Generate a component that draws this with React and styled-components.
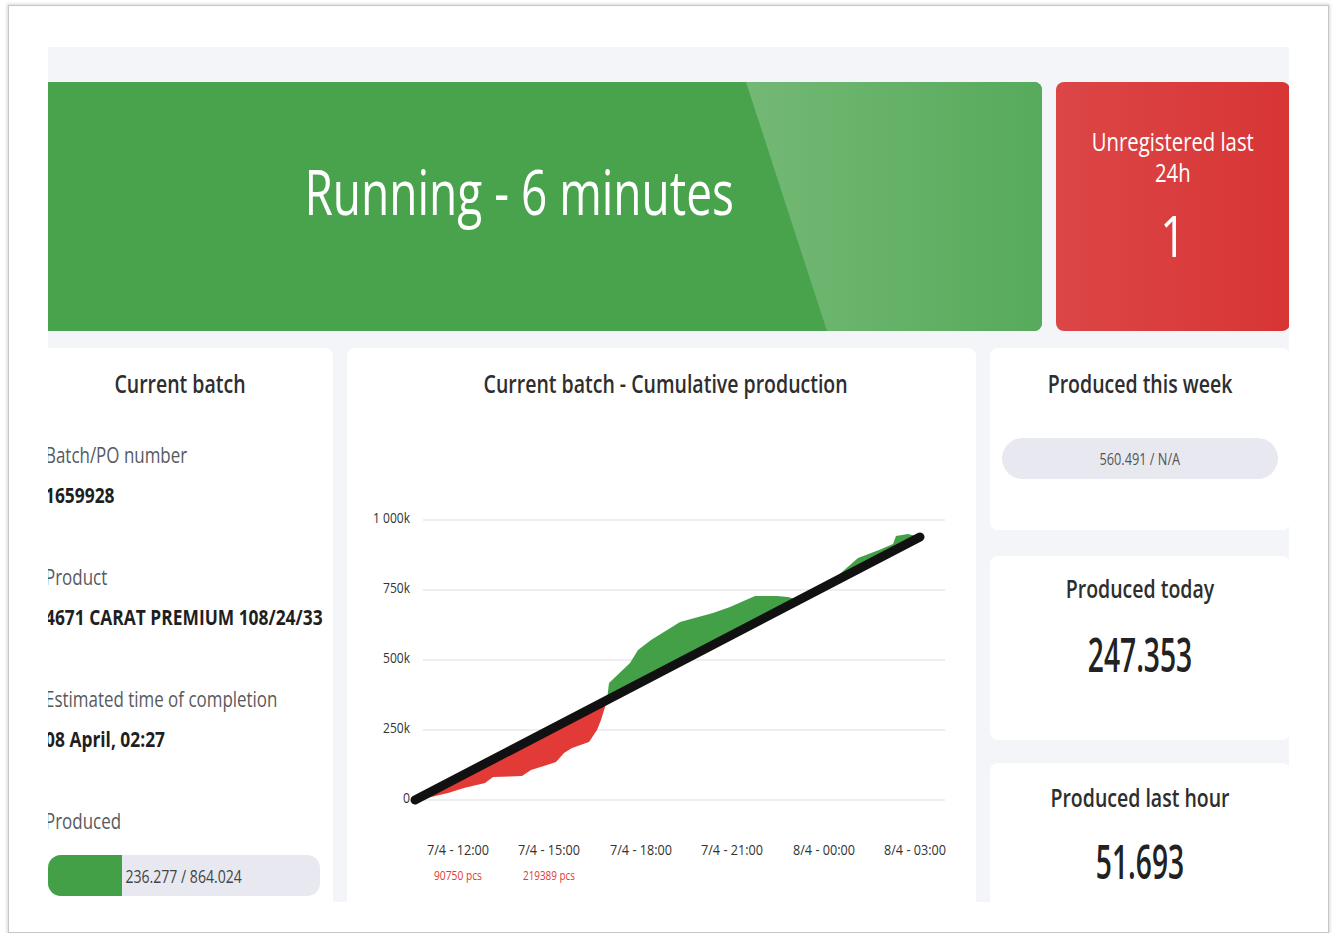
import React from 'react';
import styled, { createGlobalStyle, css } from 'styled-components';

const colors = {
  board: '#f4f5f9',
  card: '#ffffff',
  green: '#48a34c',
  fillGreen: '#43a047',
  fillRed: '#e23a36',
  track: '#e8e9f0',
  title: '#2e2e2e',
  label: '#565a5e',
  value: '#1f1f1f',
  grid: '#e9e9ec'
};

const squeeze = (k, origin = 'center') => css`
  display: block;
  white-space: nowrap;
  transform: scaleX(${k});
  transform-origin: ${origin};
`;

const GlobalStyle = createGlobalStyle`
  html, body {
    margin: 0;
    background: #ffffff;
    font-family: "Open Sans", "Noto Sans", sans-serif;
  }
`;

const Frame = styled.div`
  box-sizing: border-box;
  width: 1321px;
  height: 928px;
  margin: 5px 0 0 8px;
  padding: 41px 0 0 39px;
  border: 1px solid #c6c6c6;
  box-shadow: 0 0 3px 1px rgba(0, 0, 0, 0.16);
  background: #ffffff;
`;

const Viewport = styled.div`
  width: 1241px;
  height: 855px;
  overflow: hidden;
  background: ${colors.board};
`;

const Dashboard = styled.div`
  width: 1263px;
  margin-left: -21px;
  padding-top: 35px;
`;

const StatusRow = styled.div`
  display: grid;
  grid-template-columns: 1015px 234px;
  gap: 14px;
  height: 249px;
`;

const RunningBanner = styled.div`
  position: relative;
  overflow: hidden;
  display: flex;
  align-items: center;
  justify-content: center;
  padding: 0 31px 32px 0;
  border-radius: 8px;
  background: ${colors.green};

  &::after {
    content: '';
    position: absolute;
    inset: 0;
    clip-path: polygon(719px 0, 100% 0, 100% 100%, 800px 100%);
    background: linear-gradient(90deg, #74b976 70%, #57aa5b 100%);
  }
`;

const BannerText = styled.span`
  position: relative;
  z-index: 1;
  color: #ffffff;
  font-size: 63px;
  line-height: 76px;
  font-weight: 400;
  ${squeeze(0.73)};
`;

const AlertCard = styled.div`
  display: flex;
  flex-direction: column;
  align-items: center;
  padding-top: 44px;
  border-radius: 8px;
  background: linear-gradient(90deg, #dc4646 0%, #d83535 100%);
  color: #ffffff;
`;

const AlertLine = styled.span`
  font-size: 26px;
  line-height: 31px;
  ${squeeze(0.78)};
`;

const AlertCount = styled.span`
  margin-top: 17px;
  font-size: 56px;
  line-height: 60px;
  ${squeeze(0.8)};
`;

const CardsRow = styled.div`
  display: grid;
  grid-template-columns: 306px 629px 300px;
  gap: 14px;
  margin-top: 17px;
  align-items: start;
`;

const Card = styled.section`
  box-sizing: border-box;
  height: ${p => p.$h}px;
  padding-top: ${p => p.$pt || 18}px;
  border-radius: 8px;
  background: ${colors.card};
`;

const CardTitle = styled.h2`
  margin: 0;
  padding-left: ${p => p.$shift || 0}px;
  font-size: 26px;
  line-height: 34px;
  font-weight: 600;
  color: ${colors.title};
  text-align: center;
  ${squeeze(0.75)};
`;

const FieldList = styled.div`
  display: flex;
  flex-direction: column;
  margin-top: 40px;
  padding-left: 18px;
`;

const Field = styled.div`
  display: flex;
  flex-direction: column;
  gap: ${p => p.$gap || 12}px;
  margin-bottom: 54px;
`;

const FieldLabel = styled.span`
  font-size: 22px;
  line-height: 28px;
  color: ${colors.label};
  ${squeeze(0.77, 'left')};
`;

const FieldValue = styled.span`
  font-size: 22px;
  line-height: 28px;
  font-weight: 700;
  color: ${colors.value};
  ${squeeze(0.79, 'left')};
`;

const ProgressTrack = styled.div`
  display: grid;
  width: 272px;
  height: 41px;
  margin-left: 3px;
  overflow: hidden;
  border-radius: 13px;
  background: ${colors.track};

  & > * {
    grid-area: 1 / 1;
  }
`;

const ProgressFill = styled.div`
  justify-self: start;
  height: 100%;
  background: ${colors.fillGreen};
`;

const ProgressText = styled.span`
  align-self: center;
  justify-self: center;
  font-size: 19px;
  color: #444;
  ${squeeze(0.74)};
`;

const ChartSvg = styled.svg`
  display: block;
  width: 629px;
  height: 500px;
  font-family: "Open Sans", sans-serif;
`;

const AxisText = styled.text`
  font-size: ${p => p.$size || 15}px;
  fill: ${p => p.$color || '#333333'};
`;

const RightColumn = styled.div`
  display: flex;
  flex-direction: column;
`;

const StatCard = styled(Card)`
  display: flex;
  flex-direction: column;
  margin-top: ${p => p.$mt || 0}px;
`;

const WeekPill = styled.div`
  display: flex;
  align-items: center;
  justify-content: center;
  height: 41px;
  margin: 38px 12px 0;
  border-radius: 21px;
  background: ${colors.track};
`;

const PillText = styled.span`
  font-size: 17px;
  color: #555;
  ${squeeze(0.75)};
`;

const StatValue = styled.span`
  margin-top: ${p => p.$mt}px;
  font-size: 47px;
  line-height: 56px;
  font-weight: 600;
  color: #222;
  text-align: center;
  ${squeeze(0.6)};
`;

const gridLines = [
  { y: 120, label: '1 000k', w: 37 },
  { y: 190, label: '750k', w: 27 },
  { y: 260, label: '500k', w: 27 },
  { y: 330, label: '250k', w: 27 },
  { y: 400, label: '0', w: 7 }
];

const ticks = [
  { x: 111, label: '7/4 - 12:00', note: '90750 pcs', nw: 48 },
  { x: 202, label: '7/4 - 15:00', note: '219389 pcs', nw: 52 },
  { x: 294, label: '7/4 - 18:00' },
  { x: 385, label: '7/4 - 21:00' },
  { x: 477, label: '8/4 - 00:00' },
  { x: 568, label: '8/4 - 03:00' }
];

// behind plan: target line down to the crossing, then the actual curve back
const behindArea = [
  [68, 400], [260, 300], [258, 307], [254, 320], [250, 330], [242, 342],
  [225, 348], [217, 353], [209, 362], [200, 365], [184, 370], [175, 376],
  [146, 377], [138, 383], [117, 388], [101, 393], [80, 398]
];

const aheadArea = [
  [260, 300], [262, 283], [283, 263], [291, 250], [304, 240], [325, 227],
  [333, 222], [366, 213], [383, 207], [408, 196], [430, 196], [441, 197], [452, 200]
];

const aheadLate = [
  [480, 185], [495, 172], [511, 158], [532, 150], [546, 144], [549, 136],
  [561, 134], [573, 137]
];

const toPoints = pts => pts.map(p => p.join(',')).join(' ');

const CumulativeChart = () => (
  <ChartSvg viewBox="0 0 629 500">
    {gridLines.map(g => (
      <g key={g.label}>
        <line x1="76" x2="598" y1={g.y} y2={g.y} stroke={colors.grid} strokeWidth="1.5" />
        <AxisText x="63" y={g.y + 3} textAnchor="end" textLength={g.w} lengthAdjust="spacingAndGlyphs">
          {g.label}
        </AxisText>
      </g>
    ))}

    <polygon points={toPoints(behindArea)} fill={colors.fillRed} />
    <polygon points={toPoints(aheadArea)} fill={colors.fillGreen} />
    <polygon points={toPoints(aheadLate)} fill={colors.fillGreen} />
    <line x1="68" y1="400" x2="573" y2="137" stroke="#111" strokeWidth="9" strokeLinecap="round" />

    {ticks.map(t => (
      <g key={t.label}>
        <AxisText x={t.x} y="455" textAnchor="middle" textLength="62" lengthAdjust="spacingAndGlyphs">
          {t.label}
        </AxisText>
        {t.note && (
          <AxisText
            x={t.x}
            y="480"
            $size={12}
            $color={colors.fillRed}
            textAnchor="middle"
            textLength={t.nw}
            lengthAdjust="spacingAndGlyphs"
          >
            {t.note}
          </AxisText>
        )}
      </g>
    ))}
  </ChartSvg>
);

const batch = {
  number: '1659928',
  product: '4671 CARAT PREMIUM 108/24/33',
  eta: '08 April, 02:27',
  produced: 236277,
  target: 864024
};

const fmt = n => n.toLocaleString('de-DE');

const App = () => {
  const pct = (batch.produced / batch.target) * 100;

  return (
    <>
      <GlobalStyle />
      <Frame>
        <Viewport>
          <Dashboard>
            <StatusRow>
              <RunningBanner>
                <BannerText>Running - 6 minutes</BannerText>
              </RunningBanner>
              <AlertCard>
                <AlertLine>Unregistered last</AlertLine>
                <AlertLine>24h</AlertLine>
                <AlertCount>1</AlertCount>
              </AlertCard>
            </StatusRow>

            <CardsRow>
              <Card $h={600}>
                <CardTitle>Current batch</CardTitle>
                <FieldList>
                  <Field>
                    <FieldLabel>Batch/PO number</FieldLabel>
                    <FieldValue>{batch.number}</FieldValue>
                  </Field>
                  <Field>
                    <FieldLabel>Product</FieldLabel>
                    <FieldValue>{batch.product}</FieldValue>
                  </Field>
                  <Field>
                    <FieldLabel>Estimated time of completion</FieldLabel>
                    <FieldValue>{batch.eta}</FieldValue>
                  </Field>
                  <Field $gap={21}>
                    <FieldLabel>Produced</FieldLabel>
                    <ProgressTrack>
                      <ProgressFill style={{ width: `${pct}%` }} />
                      <ProgressText>
                        {fmt(batch.produced)} / {fmt(batch.target)}
                      </ProgressText>
                    </ProgressTrack>
                  </Field>
                </FieldList>
              </Card>

              <Card $h={600}>
                <CardTitle $shift={11}>Current batch - Cumulative production</CardTitle>
                <CumulativeChart />
              </Card>

              <RightColumn>
                <StatCard $h={182}>
                  <CardTitle>Produced this week</CardTitle>
                  <WeekPill>
                    <PillText>560.491 / N/A</PillText>
                  </WeekPill>
                </StatCard>
                <StatCard $h={184} $pt={15} $mt={26}>
                  <CardTitle>Produced today</CardTitle>
                  <StatValue $mt={21}>247.353</StatValue>
                </StatCard>
                <StatCard $h={220} $pt={17} $mt={23}>
                  <CardTitle>Produced last hour</CardTitle>
                  <StatValue $mt={19}>51.693</StatValue>
                </StatCard>
              </RightColumn>
            </CardsRow>
          </Dashboard>
        </Viewport>
      </Frame>
    </>
  );
};

export default App;
